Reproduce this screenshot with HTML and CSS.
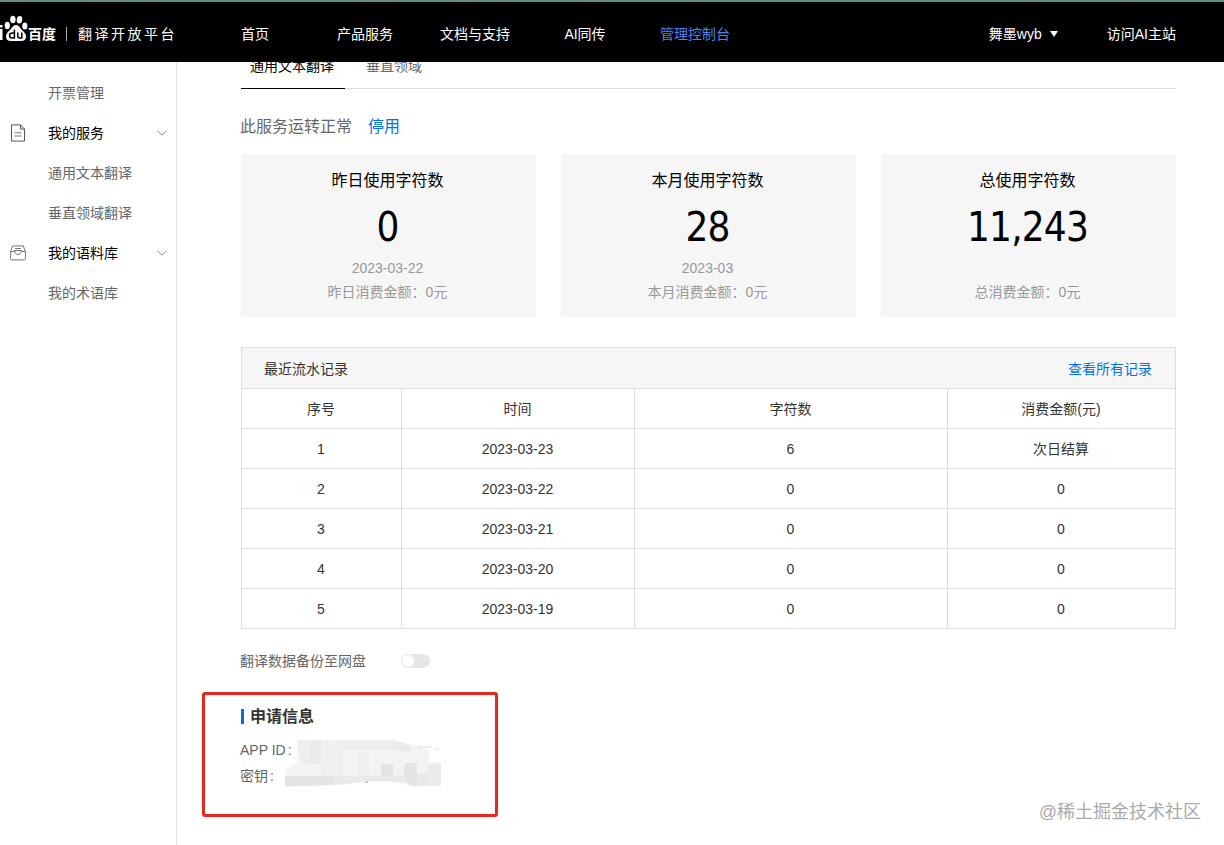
FILE: index.html
```html
<!DOCTYPE html>
<html lang="zh-CN">

<head>
    <meta charset="UTF-8">
    <title>百度翻译开放平台</title>
    <link rel="stylesheet" href="styles.css">
</head>

<body>
    <header class="header">
        <div class="logo">
            <svg class="logo-paw" width="28" height="28" viewBox="0 0 28 28">
                <path d="M0 15h2.500v11H0z M0 11h2.500v2.500H0z" fill="#fff" />
                <ellipse cx="7.3" cy="11.5" rx="2.6" ry="3.7" fill="#fff" />
                <ellipse cx="12.9" cy="5.5" rx="2.7" ry="3.8" fill="#fff" />
                <ellipse cx="19.5" cy="5.7" rx="2.7" ry="3.8" transform="rotate(10 19.5 5.7)" fill="#fff" />
                <ellipse cx="24.8" cy="12" rx="2.6" ry="3.6" fill="#fff" />
                <path d="M16 11c-3 0-4 3-6 5-2 1.800-4 3.500-4 6.500 0 3 2 4.500 5 4.500h10c3 0 5-1.500 5-4.500 0-3-2-4.500-4-6.500-2-2-3-5-6-5z" fill="#fff" />
                <path d="M14.400 15.500v8.500h-2c-3.800 0-3.800-5 0-5h2M17.800 18.500v3.500c0 1.300.7 2 2 2h2v-5.500" fill="none" stroke="#000" stroke-width="1.500" />
            </svg>
            <b class="logo-name">百度</b>
            <i class="logo-line"></i>
            <span class="logo-title">翻译开放平台</span>
        </div>
        <nav class="nav">
            <a>首页</a>
            <a>产品服务</a>
            <a>文档与支持</a>
            <a>AI同传</a>
            <a class="current">管理控制台</a>
        </nav>
        <div class="user">
            <span class="user-name">舞墨wyb</span>
            <a>访问AI主站</a>
        </div>
    </header>

    <div class="page">
        <aside class="sidebar">
            <a class="item">开票管理</a>
            <div class="item group">
                <svg class="icon" width="16" height="18" viewBox="0 0 16 18" fill="none" stroke="#555">
                    <path d="M1.500.9h9l4 4.100v12.100h-13z M10.500.9v4.100h4" />
                    <path d="M4.500 8.800h7M4.500 12h7" stroke="#777" />
                </svg>
                我的服务
                <svg class="arrow" width="10" height="6" viewBox="0 0 10 6" fill="none" stroke="#888">
                    <path d="M.5.7 5 5.200 9.500.7" />
                </svg>
            </div>
            <a class="item">通用文本翻译</a>
            <a class="item">垂直领域翻译</a>
            <div class="item group">
                <svg class="icon" width="16" height="18" viewBox="0 0 16 18" fill="none" stroke="#777">
                    <path d="M.6 7.500 2.700 1.900h10.600l2.100 5.600v7.400q0 1-1 1H1.600q-1 0-1-1z" />
                    <path d="M.6 7.500h4.200c.3 4 6.100 4 6.400 0h4.200M5 4.500h6M4 6.500h8" />
                </svg>
                我的语料库
                <svg class="arrow" width="10" height="6" viewBox="0 0 10 6" fill="none" stroke="#888">
                    <path d="M.5.7 5 5.200 9.500.7" />
                </svg>
            </div>
            <a class="item">我的术语库</a>
        </aside>

        <main class="main">
            <div class="tabs">
                <a class="tab active">通用文本翻译</a>
                <a class="tab">垂直领域</a>
            </div>

            <p class="status">此服务运转正常<a class="link">停用</a></p>

            <section class="cards">
                <div class="card">
                    <h3>昨日使用字符数</h3>
                    <strong>0</strong>
                    <p>2023-03-22</p>
                    <p>昨日消费金额：0元</p>
                </div>
                <div class="card">
                    <h3>本月使用字符数</h3>
                    <strong>28</strong>
                    <p>2023-03</p>
                    <p>本月消费金额：0元</p>
                </div>
                <div class="card">
                    <h3>总使用字符数</h3>
                    <strong>11,243</strong>
                    <p></p>
                    <p>总消费金额：0元</p>
                </div>
            </section>

            <section class="records">
                <div class="records-title">最近流水记录<a class="link">查看所有记录</a></div>
                <table>
                    <colgroup>
                        <col class="col-no">
                        <col class="col-time">
                        <col class="col-chars">
                        <col class="col-cost">
                    </colgroup>
                    <tr><th>序号</th><th>时间</th><th>字符数</th><th>消费金额(元)</th></tr>
                    <tr><td>1</td><td>2023-03-23</td><td>6</td><td>次日结算</td></tr>
                    <tr><td>2</td><td>2023-03-22</td><td>0</td><td>0</td></tr>
                    <tr><td>3</td><td>2023-03-21</td><td>0</td><td>0</td></tr>
                    <tr><td>4</td><td>2023-03-20</td><td>0</td><td>0</td></tr>
                    <tr><td>5</td><td>2023-03-19</td><td>0</td><td>0</td></tr>
                </table>
            </section>

            <div class="backup">翻译数据备份至网盘<span class="switch"></span></div>

            <section class="info">
                <h2>申请信息</h2>
                <p>APP ID<span class="colon">:</span></p>
                <p>密钥<span class="colon">:</span></p>
                <!-- hidden credentials -->
                <svg class="mosaic" width="170" height="50" viewBox="0 0 170 50">
                    <path d="M22 1h96q18 4 36 9v13h12v24h-30q-20-6-48-4-25 5-60 4-14 1-17-6v-9q7-8 11-8z" fill="#f3f3f3" />
                    <path d="M22 1h24v24H26z M68 1h50l18 9H68z" fill="#eee" />
                    <path d="M34 1h12v24H34z M118 2l18 5v5h-18z" fill="#eaeaea" />
                    <path d="M46 1h22v36H46z M82 13h12v24H82z" fill="#f0f0f0" />
                    <path d="M106 25h12v13h-12z M130 24h12v23h-6l-8-6z M10 37h48v8q-25 3-48 2z" fill="#e4e4e4" />
                    <path d="M58 37h32l40-1v7q-22-2-42 0l-30 3z M142 35h11v12h-11z" fill="#e9e9e9" />
                    <path d="M153 25h13v22h-13z" fill="#ebebeb" />
                    <path d="M143 8h14M160 10h5" stroke="#ddd" fill="none" stroke-dasharray="4 1" />
                    <path d="M93 42l-2 2" stroke="#888" fill="none" />
                </svg>
            </section>
        </main>
    </div>

    <div class="mark"></div>
    <div class="watermark">@稀土掘金技术社区</div>
</body>

</html>
```
FILE: styles.css
```css
* {
    box-sizing: border-box;
    margin: 0;
    padding: 0;
}

body {
    width: 1224px;
    height: 845px;
    overflow: hidden;
    position: relative;
    background: #fff;
    color: #333;
    font: 14px/20px "Liberation Sans", "Noto Sans CJK SC", sans-serif;
}

/* header */
.header {
    display: flex;
    height: 62px;
    padding-right: 48px;
    border-top: 2px solid #5f9182;
    background: #000;
    color: #fff;
    line-height: 64px;
}

.logo {
    display: flex;
    align-items: center;
    width: 200px;
    padding-top: 3px;
}

.logo-paw {
    margin-top: -11px;
}

.logo-name {
    font-size: 14px;
}

.logo-line {
    width: 1px;
    height: 14px;
    margin: 0 11px 0 10px;
    background: #aaa;
}

.logo-title {
    letter-spacing: 2.5px;
    white-space: nowrap;
}

.nav {
    display: flex;
}

.nav a {
    width: 110px;
    text-align: center;
}

.nav .current {
    color: #4b83f5;
}

.user {
    display: flex;
    gap: 49px;
    margin-left: auto;
}

.user-name::after {
    content: "";
    display: inline-block;
    margin-left: 8px;
    vertical-align: 2px;
    border: 4.5px solid transparent;
    border-top: 6px solid #fff;
    border-bottom: 0;
}

.page {
    display: flex;
    height: 783px;
    overflow: hidden;
}

/* sidebar */
.sidebar {
    width: 177px;
    padding-top: 11px;
    border-right: 1px solid #e3e3e3;
}

.item {
    display: flex;
    align-items: center;
    height: 40px;
    padding: 0 9px 0 48px;
    color: #666;
}

.group {
    padding-left: 10px;
    color: #000;
}

.icon {
    margin-right: 22px;
}

.arrow {
    margin-left: auto;
}

/* content */
.main {
    width: 935px;
    margin-left: 64px;
}

.tabs {
    display: flex;
    gap: 12px;
    height: 43px;
    margin-top: -16px;
    border-bottom: 1px solid #ddd;
    line-height: 40px;
}

.tab {
    height: 43px;
    padding: 0 11px 0 9px;
    color: #666;
}

.tab.active {
    color: #000;
    border-bottom: 1px solid #000;
}

.link {
    color: #0073eb;
}

.status {
    height: 65px;
    margin-left: -1px;
    padding-top: 28px;
    font-size: 16px;
    color: #666;
}

.status .link {
    margin-left: 16px;
}

.cards {
    display: grid;
    grid-template-columns: repeat(3, 1fr);
    gap: 25px;
}

.card {
    height: 163px;
    padding: 15px 2px 0 0;
    background: #f6f6f6;
    text-align: center;
    color: #999;
}

.card h3 {
    color: #000;
    font-size: 16px;
    font-weight: normal;
    line-height: 24px;
}

.card strong {
    display: block;
    height: 63px;
    color: #000;
    font: 40px/69px "DejaVu Sans Condensed", "DejaVu Sans", sans-serif;
    font-stretch: condensed;
    letter-spacing: -0.8px;
}

.card p {
    height: 24px;
    line-height: 24px;
}

.records {
    margin-top: 30px;
    border: 1px solid #ddd;
    border-width: 1px 0 0 1px;
}

.records-title {
    display: flex;
    justify-content: space-between;
    height: 41px;
    padding: 0 23px 0 22px;
    border: 1px solid #ddd;
    border-width: 0 1px 1px 0;
    background: #f6f6f6;
    line-height: 42px;
}

table {
    width: 934px;
    table-layout: fixed;
    border-spacing: 0;
}

.col-no {
    width: 160px;
}

.col-time {
    width: 233px;
}

.col-chars {
    width: 313px;
}

.col-cost {
    width: 228px;
}

th,
td {
    height: 40px;
    padding-right: 1px;
    border: 1px solid #ddd;
    border-width: 0 1px 1px 0;
    font-weight: normal;
    text-align: center;
}

.backup {
    display: flex;
    align-items: center;
    margin: 22px 0 0 -1px;
    color: #666;
}

.switch {
    width: 29px;
    height: 14px;
    margin-left: 35px;
    padding: 1px;
    border-radius: 7px;
    background: #e6e6e6;
}

.switch::before {
    content: "";
    display: block;
    width: 12px;
    height: 12px;
    border-radius: 50%;
    background: #fff;
}

.info {
    position: relative;
    margin-top: 35px;
    color: #666;
}

.info h2 {
    height: 20px;
    margin-bottom: 11px;
    color: #333;
    font-size: 16px;
    line-height: 21px;
}

.info h2::before {
    content: "";
    display: inline-block;
    width: 3px;
    height: 15px;
    margin-right: 6px;
    vertical-align: -2px;
    background: #0a6be0;
}

.info p {
    margin-left: -1px;
    line-height: 26px;
}

.colon {
    margin-left: 2px;
}

.mosaic {
    position: absolute;
    left: 34px;
    top: 33px;
}

/* overlays */
.mark {
    position: absolute;
    left: 202px;
    top: 692px;
    width: 296px;
    height: 125px;
    border: 3px solid #e6291f;
    border-radius: 3px;
}

.watermark {
    position: absolute;
    right: 23px;
    top: 800px;
    color: #aaa;
    font-size: 18px;
    line-height: 24px;
}
```
